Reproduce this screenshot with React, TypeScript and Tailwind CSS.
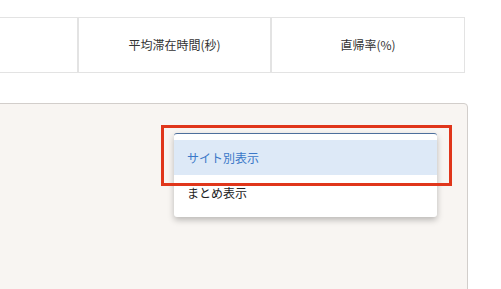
const FONT = "font-['Noto_Sans_CJK_JP','Noto_Sans',sans-serif]";

export default function App() {
  return (
    <div className={`h-[289px] w-[501px] overflow-hidden bg-white ${FONT}`}>
      {/* 指標ヘッダー */}
      <div className="mt-[17px] flex h-[56px] w-[465px] border-y border-[#e3e3e3] text-[12px] text-[#333]">
        <div className="flex w-[78px] items-center border-r border-[#e3e3e3]" />
        <div className="flex w-[193px] items-center justify-center border-x border-[#e3e3e3]">
          平均滞在時間(秒)
        </div>
        <div className="flex flex-1 items-center justify-center border-x border-[#e3e3e3]">
          直帰率(%)
        </div>
      </div>

      {/* パネル */}
      <div className="relative -ml-[4px] mt-[30px] h-[200px] w-[472px] rounded-tr-[4px] border border-[#d2cecb] bg-[#f8f5f2]">
        <div className="absolute left-[177px] top-[29px] w-[263px] overflow-hidden rounded-[3px] border-t border-[#4d6f9c] bg-white pb-[7px] pt-[6px] text-[12px] shadow-[0_3px_6px_rgba(0,0,0,0.25)]">
          <div className="flex h-[35px] items-center bg-[#dde9f7] px-[13px] text-[#3b78c8]">サイト別表示</div>
          <div className="flex h-[35px] items-center px-[13px] text-[#222]">まとめ表示</div>
        </div>
        {/* 強調枠 */}
        <div className="pointer-events-none absolute left-[164px] top-[21px] h-[61px] w-[291px] border-[3px] border-[#e0361b]" />
      </div>
    </div>
  );
}
